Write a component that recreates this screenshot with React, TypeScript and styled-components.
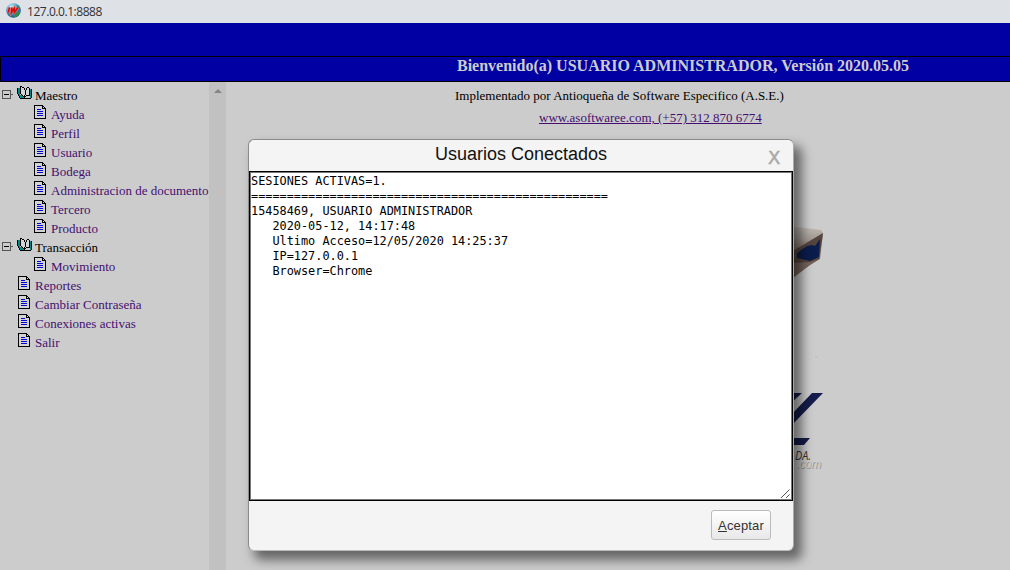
import React from 'react';
import styled, { createGlobalStyle } from 'styled-components';

const Global = createGlobalStyle`
  * { box-sizing: border-box; }
  html, body, #root { height: 100%; }
  body { margin: 0; overflow: hidden; background: #ccc; font-family: "Liberation Serif", serif; }
`;

const Page = styled.div`
  height: 570px;
  display: flex;
  flex-direction: column;
  position: relative;
`;
const AddressBar = styled.div`
  height: 23px;
  flex: none;
  background: #dee1e6;
  display: flex;
  align-items: center;
  padding-left: 6px;
  gap: 6px;
  font: 12px/22px "Open Sans", sans-serif;
  letter-spacing: -0.45px;
  color: #303134;
  svg { display: block; margin-bottom: 2px; }
`;
const TopBand = styled.div`
  height: 33px;
  flex: none;
  background: #0000a3;
`;
const WelcomeBar = styled.div`
  height: 26px;
  flex: none;
  background: #0000a3;
  border: 1px solid #000;
  border-right: 0;
  padding-left: 456px;
  font-size: 16px;
  font-weight: bold;
  line-height: 18px;
  color: #ccc;
  white-space: nowrap;
`;
const Body = styled.div`
  flex: 1;
  display: flex;
  min-height: 0;
`;
const Tree = styled.nav`
  width: 209px;
  padding-top: 4px;
`;
const Row = styled.div<{ $indent: number }>`
  height: 19px;
  display: flex;
  align-items: flex-start;
  padding-left: ${p => p.$indent}px;
  white-space: nowrap;
  svg { display: block; flex: none; }
`;
const Label = styled.span<{ $link?: boolean; $gap: number }>`
  margin-left: ${p => p.$gap}px;
  font-size: 13px;
  line-height: 20px;
  color: ${p => (p.$link ? '#440f70' : '#000')};
`;
const CollapseSlot = styled.div`
  padding-top: 4px;
`;
const BookSlot = styled.div`
  padding-left: 3px;
  margin-top: -1px;
`;
const ScrollTrack = styled.div`
  width: 17px;
  background: #c1c1c1;
  display: flex;
  justify-content: center;
  padding-top: 7px;
`;
const Main = styled.main`
  flex: 1;
  position: relative;
`;
const Credit = styled.p`
  margin: 5px 0 0 229px;
  font-size: 13px;
  line-height: 18px;
  white-space: nowrap;
`;
const Site = styled.a`
  display: block;
  margin: 4px 0 0 313px;
  font-size: 13px;
  line-height: 18px;
  white-space: nowrap;
  color: #440f70;
  text-decoration: underline;
`;
const Artwork = styled.svg`
  position: absolute;
  left: 554px;
  top: 138px;
`;
const EmbossedText = styled.text`
  font: italic 12px "Liberation Sans", sans-serif;
  fill: #d0d0d0;
  text-shadow: 1px 1px 0 #999;
`;
const Dialog = styled.section`
  position: absolute;
  left: 248px;
  top: 139px;
  width: 546px;
  height: 412px;
  display: flex;
  flex-direction: column;
  background: #f4f4f4;
  border: 1px solid #8b8b8b;
  border-right-color: #aaa;
  border-bottom-color: #bbb;
  border-radius: 6px;
  box-shadow: 7px 8px 11px 1px rgba(0, 0, 0, 0.5);
`;
const DialogHead = styled.header`
  height: 31px;
  flex: none;
  display: flex;
  font-family: "Liberation Sans", sans-serif;
`;
const Title = styled.h1`
  margin: 0 0 0 186px;
  width: 333px;
  font-size: 18px;
  font-weight: normal;
  line-height: 29px;
  color: #111;
`;
const Close = styled.button`
  border: 0;
  padding: 0;
  background: none;
  font: 18px/36px "DejaVu Sans", sans-serif;
  -webkit-text-stroke: 0.5px #aaa;
  color: #aaa;
`;
const Log = styled.pre`
  margin: 0;
  height: 330px;
  flex: none;
  position: relative;
  background: #fff;
  border: 1px solid #000;
  box-shadow: inset 0 0 0 1px #777;
  padding: 2px 1px;
  font: 11.87px/15px "DejaVu Sans Mono", monospace;
  color: #000;
`;
const Grip = styled.svg`
  position: absolute;
  right: 2px;
  bottom: 2px;
`;
const Actions = styled.footer`
  display: flex;
  justify-content: flex-end;
  padding: 9px 22px 0 0;
`;
const Accept = styled.button`
  width: 60px;
  height: 30px;
  padding: 0;
  border: 1px solid #bbb;
  border-radius: 3px;
  background: linear-gradient(#fff, #e8e8e8);
  font: 13px "Liberation Sans", sans-serif;
  letter-spacing: 0.15px;
  color: #333;
`;

const DocIcon = () => (
  <svg width="12" height="14" viewBox="0 0 12 14" shapeRendering="crispEdges">
    <path d="M0 0h9v1h1v1h1v1h1v11H0z" fill="#000" />
    <path d="M1 1h7v3h3v9H1z" fill="#d4d4d4" />
    <path d="M9 2h1v1H9z" fill="#d4d4d4" />
    <path d="M3 4h4v1H3zM3 6h6v1H3zM3 8h6v1H3zM3 10h6v1H3z" fill="#0000d8" />
  </svg>
);
const BookIcon = () => (
  <svg width="15" height="15" viewBox="0 0 15 15" shapeRendering="crispEdges">
    <path d="M0 3h3v7h2v1h1v1h1v1h7v1H3v-1H2v-2H1V9H0zM13 4h2v9h-2z" fill="#008a8a" />
    <path d="M4 1h1v1h2v1h1v9H7v-1H6v-1H4zM8 4h1V3h3v8H9v1H8z" fill="#d4d4d4" />
    <path d="M0 3h1v6H0zM1 9h1v2H1zM2 11h1v2H2zM3 13h4v1H3zM7 14h7v-1H7zM14 4h1v9h-1zM3 1h1v8H3zM4 1h1v1H4zM5 2h2v1H5zM7 3h1v2H7zM8 5h1v5H8zM4 9h1v1H4zM5 10h1v1H5zM6 11h1v1H6zM7 10h1v3H7zM9 3h1v2H9zM10 2h2v1h-2zM12 3h1v8h-1zM9 10h3v1H9zM8 11h1v1H8z" fill="#000" />
  </svg>
);
const Collapse = () => (
  <svg width="12" height="9" viewBox="0 0 12 9" shapeRendering="crispEdges">
    <path d="M.5.5h8v8h-8zM9 4.5h2" fill="none" stroke="#555" />
    <path d="M2 4h5v1H2z" fill="#000" />
  </svg>
);
const Globe = () => (
  <svg width="15" height="15" viewBox="0 0 15 15">
    <defs>
      <radialGradient id="globe" cx=".35" cy=".25" r=".8">
        <stop offset="0" stopColor="#cbe8f4" />
        <stop offset=".5" stopColor="#4a9fbd" />
        <stop offset="1" stopColor="#164b86" />
      </radialGradient>
    </defs>
    <circle cx="7.5" cy="7.5" r="7.3" fill="url(#globe)" />
    <path d="M9 11l5-3q0 4-4 6H8zM11 2l3 3-2 1z" fill="#279344" />
    <path d="M3.5 4.5L2.3 9.5M5.8 4.5l-.3 5 2.7-4 .2 4 3.6-5" fill="none" stroke="#e57770" strokeWidth="2.3" />
    <path d="M3.5 4.5L2.3 9.5M5.8 4.5l-.3 5 2.7-4 .2 4 3.6-5" fill="none" stroke="#d90c0c" strokeWidth="1.6" />
  </svg>
);

const Branch = ({ name }: { name: string }) => (
  <Row $indent={2}>
    <CollapseSlot><Collapse /></CollapseSlot>
    <BookSlot><BookIcon /></BookSlot>
    <Label $gap={3}>{name}</Label>
  </Row>
);
const Leaf = ({ name, nested }: { name: string; nested?: boolean }) => (
  <Row $indent={nested ? 34 : 18}>
    <DocIcon />
    <Label $link $gap={5}>{name}</Label>
  </Row>
);

const modules = ['Ayuda', 'Perfil', 'Usuario', 'Bodega', 'Administracion de documento', 'Tercero', 'Producto'];
const options = ['Reportes', 'Cambiar Contraseña', 'Conexiones activas', 'Salir'];
const sessions = [
  'SESIONES ACTIVAS=1.',
  '='.repeat(50),
  '15458469, USUARIO ADMINISTRADOR',
  '   2020-05-12, 14:17:48',
  '   Ultimo Acceso=12/05/2020 14:25:37',
  '   IP=127.0.0.1',
  '   Browser=Chrome',
].join('\n');

export default function App() {
  return (
    <Page>
      <Global />
      <AddressBar><Globe />127.0.0.1:8888</AddressBar>
      <TopBand />
      <WelcomeBar>Bienvenido(a) USUARIO ADMINISTRADOR, Versión 2020.05.05</WelcomeBar>
      <Body>
        <Tree>
          <Branch name="Maestro" />
          {modules.map(m => <Leaf key={m} name={m} nested />)}
          <Branch name="Transacción" />
          <Leaf name="Movimiento" nested />
          {options.map(o => <Leaf key={o} name={o} />)}
        </Tree>
        <ScrollTrack>
          <svg width="8" height="4" viewBox="0 0 8 4"><path d="M0 4l4-4 4 4z" fill="#858585" /></svg>
        </ScrollTrack>
        <Main>
          <Credit>Implementado por Antioqueña de Software Especifico (A.S.E.)</Credit>
          <Site>www.asoftwaree.com, (+57) 312 870 6774</Site>
          <Artwork width="60" height="260" viewBox="780 220 60 260">
            <defs>
              <linearGradient id="wood" x1="0" y1="0" x2="0" y2="1">
                <stop offset="0" stopColor="#c0bbb7" />
                <stop offset=".25" stopColor="#a39a94" />
                <stop offset=".5" stopColor="#75655c" />
                <stop offset="1" stopColor="#7c7069" />
              </linearGradient>
            </defs>
            <path d="M790 226l31 4 2 3-3 26-10 6-17 13h-3z" fill="url(#wood)" />
            <path d="M790 253l18-11 15-9-1 8-3 18-9 5-20 4z" fill="#55443d" />
            <path d="M797 253l10-7 5-1 3 1 5-7-1 18-9 4-13-3z" fill="#0b1d4c" />
            <path d="M790 263l20-1 9-3-9 6-17 12h-3z" fill="#75645c" />
            <path d="M790 393h12l-12 11zM812 393h11l-33 34v-11z" fill="#161c4b" />
            <path d="M790 438h20l-6 7h-14z" fill="#161c4b" />
            <path d="M815 357h3" stroke="#bbb" />
            <text x="795" y="460" fontFamily="Open Sans, sans-serif" fontStyle="italic" fontWeight="500" fontSize="13" textLength="16" lengthAdjust="spacingAndGlyphs" fill="#333">DA.</text>
            <EmbossedText x="796" y="468" textLength="25">.com</EmbossedText>
          </Artwork>
        </Main>
      </Body>
      <Dialog>
        <DialogHead>
          <Title>Usuarios Conectados</Title>
          <Close>X</Close>
        </DialogHead>
        <Log>
          {sessions}
          <Grip width="9" height="9" viewBox="0 0 9 9"><path d="M0 9l8.5-8.5M5 9l3.5-3.5" stroke="#555" fill="none" /></Grip>
        </Log>
        <Actions><Accept><u>A</u>ceptar</Accept></Actions>
      </Dialog>
    </Page>
  );
}
